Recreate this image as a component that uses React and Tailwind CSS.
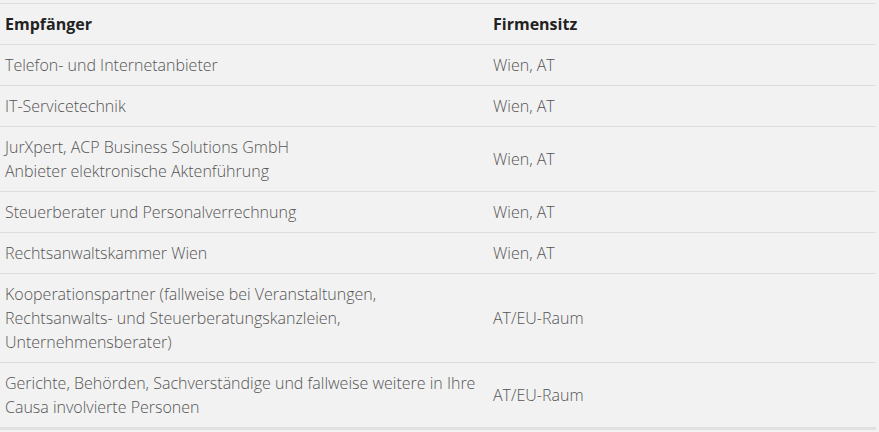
import React from "react";

const rows = [
  [["Telefon- und Internetanbieter"], "Wien, AT"],
  [["IT-Servicetechnik"], "Wien, AT"],
  [["JurXpert, ACP Business Solutions GmbH", "Anbieter elektronische Aktenführung"], "Wien, AT"],
  [["Steuerberater und Personalverrechnung"], "Wien, AT"],
  [["Rechtsanwaltskammer Wien"], "Wien, AT"],
  [["Kooperationspartner (fallweise bei Veranstaltungen,", "Rechtsanwalts- und Steuerberatungskanzleien,", "Unternehmensberater)"], "AT/EU-Raum"],
  [["Gerichte, Behörden, Sachverständige und fallweise weitere in Ihre", "Causa involvierte Personen"], "AT/EU-Raum"],
];

export default function App() {
  return (
    <div className="w-[879px] h-[432px] bg-[#f2f2f2] overflow-hidden pt-[3px]" style={{ fontFamily: '"Open Sans", sans-serif' }}>
      <table className="w-[876px] border-collapse text-[16px] leading-[24px]">
        <thead>
          <tr className="border-t border-b border-[#dedede]">
            <th className="text-left font-bold text-[#222] py-2 pl-[5px] pr-2 w-[488px]">Empfänger</th>
            <th className="text-left font-bold text-[#222] py-2 pl-[5px] pr-2">Firmensitz</th>
          </tr>
        </thead>
        <tbody>
          {rows.map(([left, right], i) => (
            <tr key={i} className={i === rows.length - 1 ? "border-b-[3px] border-[#e0e0e0]" : "border-b border-[#dedede]"}>
              <td className="text-[#555] font-light py-2 pl-[5px] pr-2 align-middle">
                {left.map((l, j) => (
                  <div key={j}>{l}</div>
                ))}
              </td>
              <td className="text-[#555] font-light py-2 pl-[5px] pr-2 align-middle">{right}</td>
            </tr>
          ))}
        </tbody>
      </table>
    </div>
  );
}
